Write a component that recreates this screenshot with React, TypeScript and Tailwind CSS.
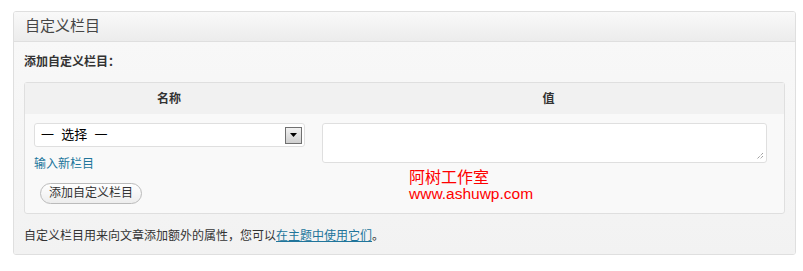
import React from "react";

const font = "font-['Liberation_Sans','Noto_Sans_CJK_SC',sans-serif]";

function SelectArrow() {
  return (
    <span className="flex h-[17px] w-[17px] items-center justify-center border border-[#707070] bg-gradient-to-b from-[#f2f2f2] to-[#cfcfcf]">
      <svg width="7" height="4" viewBox="0 0 7 4">
        <path d="M0 0h7L3.5 4z" fill="#000" />
      </svg>
    </span>
  );
}

function ResizeGrip() {
  return (
    <svg className="absolute bottom-[2px] right-[2px]" width="8" height="8" viewBox="0 0 8 8">
      <path d="M7 1L1 7M7 4L4 7" stroke="#777" strokeWidth="1" strokeDasharray="1 1" />
    </svg>
  );
}

export default function App() {
  return (
    <div className={`h-[271px] w-[803px] bg-white pl-[13px] pr-[7px] pt-[11px] ${font}`}>
      <div className="flex h-[244px] flex-col overflow-hidden rounded-[3px] border border-[#dfdfdf]">
        <div className="flex h-[30px] items-center border-b border-[#dfdfdf] bg-gradient-to-b from-[#f9f9f9] to-[#ececec] px-[11px] text-[15px] text-[#464646] shadow-[0_1px_0_#fff]">
          自定义栏目
        </div>
        <div className="flex flex-1 flex-col bg-gradient-to-b from-[#f8f8f8] to-[#f2f2f2] px-[10px] pt-[11px]">
          <div className="text-[12px] font-bold leading-[18px] text-[#333]">添加自定义栏目：</div>
          <div className="mt-[11px] h-[132px] rounded-[3px] border border-[#dfdfdf] bg-[#f9f9f9]">
            <div className="grid h-[31px] grid-cols-[288px_1fr] items-center bg-[#f1f1f1] text-[12px] font-bold text-[#333]">
              <div className="text-center">名称</div>
              <div className="text-center">值</div>
            </div>
            <div className="grid grid-cols-[288px_1fr]">
              <div className="flex flex-col items-start pl-[9px] pt-[9px]">
                <div className="flex h-[24px] w-[271px] items-center justify-between rounded-[3px] border border-[#dfdfdf] bg-white pl-[6px] pr-[2px] text-[13px] text-black">
                  <span className="whitespace-pre">一  选择  一</span>
                  <SelectArrow />
                </div>
                <a className="mt-[8px] text-[12px] leading-[18px] text-[#21759b]">输入新栏目</a>
                <button className="ml-[6px] mt-[10px] h-[21px] rounded-full border border-[#bbb] bg-gradient-to-b from-white to-[#ededed] px-[8px] text-[12px] leading-[19px] text-[#333]">
                  添加自定义栏目
                </button>
              </div>
              <div className="flex flex-col pl-[9px] pr-[17px] pt-[9px]">
                <div className="relative h-[40px] rounded-[3px] border border-[#dfdfdf] bg-white">
                  <ResizeGrip />
                </div>
                <div className="ml-[87px] mt-[7px] leading-[16px] text-[#ff0000]">
                  <div className="text-[16px]">阿树工作室</div>
                  <div className="text-[15.5px]">www.ashuwp.com</div>
                </div>
              </div>
            </div>
          </div>
          <div className="mt-[13px] text-[12px] leading-[18px] text-[#333]">
            自定义栏目用来向文章添加额外的属性，您可以
            <a className="text-[#21759b] underline">在主题中使用它们</a>。
          </div>
        </div>
      </div>
    </div>
  );
}
